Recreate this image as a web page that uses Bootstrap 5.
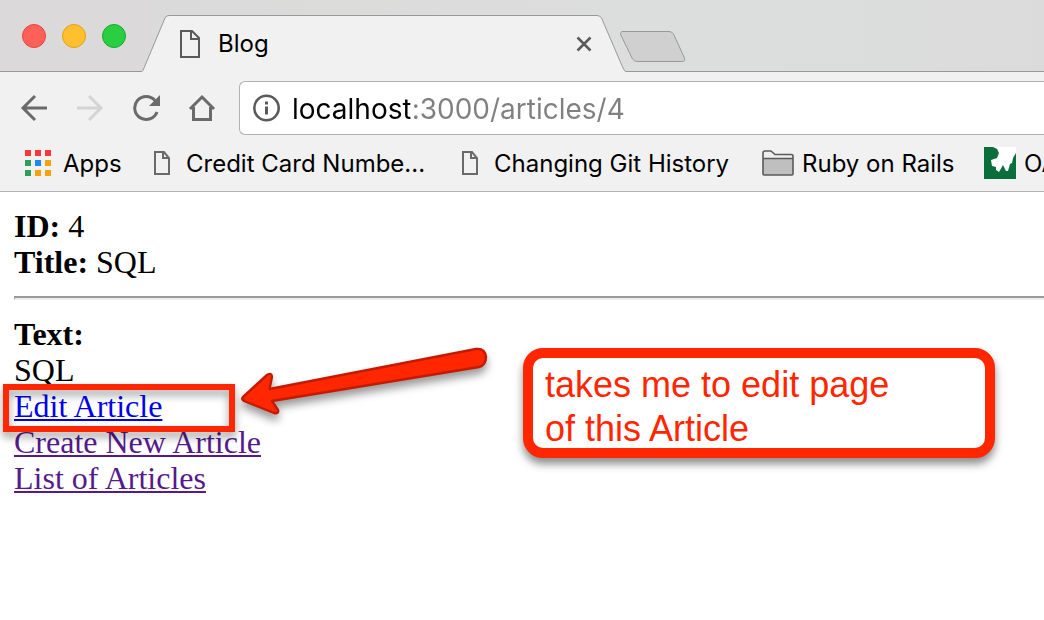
<!DOCTYPE html>
<html lang="en">
<head>
<meta charset="utf-8">
<meta name="viewport" content="width=device-width, initial-scale=1">
<title>Blog</title>
<link href="https://cdn.jsdelivr.net/npm/bootstrap@5.3.0/dist/css/bootstrap.min.css" rel="stylesheet">
<style>
  body { background: #fff; color: #000; overflow-x: hidden; }
  svg { display: block; flex: none; }
  .browser-ui { background: #f1f1f1; border-bottom: 1px solid #b2b2b2; font-family: Inter, "Liberation Sans", sans-serif; font-size: 24px; line-height: 32px; overflow: hidden; }
  .tab-strip { height: 72px; background: linear-gradient(90deg, #dbd9d9, #dcdedd 70%, #dbdbdb); box-shadow: inset 0 -1px #999; }
  .lights { gap: 16px; padding: 24px 0 0 22px; width: 142px; }
  .light { width: 24px; height: 24px; border-radius: 50%; border: 1px solid; }
  .light-close { background: #ff6159; border-color: #e2463f; }
  .light-min { background: #ffbf2f; border-color: #e1a116; }
  .light-max { background: #29ce41; border-color: #17a92b; }
  .page-tab { width: 478px; height: 72px; padding: 16px 28px 0 38px; }
  .tab-row { gap: 18px; }
  .plain-btn { background: none; border: 0; padding: 0; color: inherit; }
  .new-tab { padding-top: 28px; }
  .nav-tools { padding: 9px 0 0 20px; }
  .tool-set { gap: 28px; width: 219px; }
  .address { background: #fff; border: 1px solid #b2b2b2; border-right: 0; border-radius: 6px 0 0 6px; height: 54px; padding: 0 12px; gap: 10px; }
  .url-input { border: 0; outline: 0; padding: 2px 0 0; height: 42px; min-width: 0; font: 28px/40px Inter, "Liberation Sans", sans-serif; color: #808080; background: linear-gradient(90deg, #000 118px, #808080 118px); -webkit-background-clip: text; background-clip: text; -webkit-text-fill-color: transparent; }
  .bookmarks { height: 56px; padding-left: 25px; white-space: nowrap; }
  .bookmarks a { color: #000; text-decoration: none; flex: none; gap: 8px; }
  .bookmarks .bm-apps { width: 129px; gap: 12px; }
  .bookmarks .bm-page { width: 308px; gap: 16px; }
  .bookmarks .bm-page-last { width: 300px; }
  .bookmarks .bm-folder { width: 222px; }
  .bm-label { padding-top: 2px; }
  .article { padding: 16px 0 16px 14px; font: 32px/36px "Liberation Serif", serif; }
  .article hr { margin: 16px 0; border: 0; border-top: 2px solid #999; border-bottom: 2px solid #eee; border-left: 1px solid #999; opacity: 1; }
  .article a { color: #551a8b; text-underline-offset: 2px; text-decoration-thickness: 2px; }
  .article a.fresh { color: #00e; }
  .highlight { left: -11px; top: -4px; width: 232px; height: 48px; border: 6px solid #ff2600; filter: drop-shadow(0 5px 4px rgba(0,0,0,.4)); pointer-events: none; }
  .arrow { left: 226px; top: -44px; filter: drop-shadow(0 6px 4px rgba(0,0,0,.4)); overflow: visible; pointer-events: none; }
  .callout { left: 523px; top: 156px; width: 472px; height: 110px; border: 10px solid #ff2600; border-radius: 20px; background: #fff; box-shadow: 0 6px 8px rgba(0,0,0,.45); padding: 5px 12px 0; color: #ff2600; font: 36px/44px "Liberation Sans", sans-serif; }
</style>
</head>
<body>
<header class="browser-ui">
  <div class="tab-strip d-flex">
    <div class="lights d-flex flex-shrink-0">
      <button class="light light-close p-0" aria-label="Close window"></button>
      <button class="light light-min p-0" aria-label="Minimize window"></button>
      <button class="light light-max p-0" aria-label="Zoom window"></button>
    </div>
    <div class="page-tab position-relative flex-shrink-0">
      <svg class="position-absolute top-0 start-0" width="484" height="72" viewBox="0 0 484 72" aria-hidden="true"><path d="M0 71.5Q1 71 2 68L23 18Q24 15.500 27 15.500H455Q458 15.500 459.500 18L481 68Q482.500 71.500 484 71.500V73H0Z" fill="#f1f1f1"/><path d="M0 71.500Q1 71 2 68L23 18Q24 15.500 27 15.500H455Q458 15.500 459.500 18L481 68Q482.500 71.500 484 71.500" fill="none" stroke="#999"/></svg>
      <div class="tab-row d-flex align-items-center position-relative h-100">
        <svg width="20" height="28" viewBox="0 0 20 28" fill="none" stroke="#5a5a5a" stroke-width="2" aria-hidden="true"><path d="M1 1H12L19 8V27H1ZM11 1V9H19"/></svg>
        <span class="flex-grow-1">Blog</span>
        <button class="plain-btn" aria-label="Close tab"><svg width="16" height="16" viewBox="0 0 16 16" stroke="#5a5a5a" stroke-width="2.500"><path d="M1.500 1.500L14.500 14.500M14.500 1.500L1.500 14.500"/></svg></button>
      </div>
    </div>
    <button class="plain-btn new-tab align-self-start" aria-label="New tab"><svg width="66" height="36" viewBox="0 0 66 36"><path d="M3 3.500H49Q52 3.500 53.500 6L64.500 30Q65.500 33.500 62 33.500H18Q14 33.500 12.500 31L.8 7Q-.2 3.500 3 3.500Z" fill="#d0d0d0" stroke="#999"/></svg></button>
  </div>
  <div class="nav-tools d-flex align-items-center">
    <div class="tool-set d-flex flex-shrink-0">
      <button class="plain-btn" aria-label="Back"><svg width="28" height="28" viewBox="0 0 28 28" fill="none" stroke="#6a6a6a" stroke-width="3"><path d="M27 14H3M15 2L3 14L15 26"/></svg></button>
      <button class="plain-btn" aria-label="Forward"><svg width="28" height="28" viewBox="0 0 28 28" fill="none" stroke="#d4d4d4" stroke-width="3"><path d="M1 14H25M13 2L25 14L13 26"/></svg></button>
      <button class="plain-btn" aria-label="Reload"><svg width="28" height="28" viewBox="0 0 28 28"><path d="M23 6.500A11.500 11.500 0 1 0 25 18" fill="none" stroke="#6a6a6a" stroke-width="3"/><path d="M28 1V12H17Z" fill="#6a6a6a"/></svg></button>
      <button class="plain-btn" aria-label="Home"><svg width="28" height="28" viewBox="0 0 28 28" fill="none" stroke="#6a6a6a" stroke-width="3"><path d="M2 15L14 3L26 15M5.500 13V25.500H22.500V13"/></svg></button>
    </div>
    <div class="address d-flex align-items-center flex-grow-1">
      <svg width="30" height="30" viewBox="0 0 30 30" aria-hidden="true"><circle cx="14.500" cy="15" r="12.200" fill="none" stroke="#5a5a5a" stroke-width="2.600"/><path d="M13 8.500H16V11.500H13ZM13 13.500H16V21.500H13Z" fill="#5a5a5a"/></svg>
      <input class="url-input flex-grow-1" type="text" aria-label="Address" value="localhost:3000/articles/4">
    </div>
  </div>
  <nav class="bookmarks d-flex align-items-center" aria-label="Bookmarks">
    <a href="#" class="d-flex align-items-center bm-apps"><svg width="26" height="26" viewBox="0 0 26 26" aria-hidden="true"><path d="M0 0h6v6H0zM10 0h6v6h-6zM20 0h6v6h-6z" fill="#f9383a"/><path d="M0 10h6v6H0zM0 20h6v6H0z" fill="#2e9f58"/><path d="M10 10h6v6h-6z" fill="#1e88f7"/><path d="M20 10h6v6h-6zM10 20h6v6h-6zM20 20h6v6h-6z" fill="#f3a508"/></svg><span class="bm-label">Apps</span></a>
    <a href="#" class="d-flex align-items-center bm-page"><svg width="16" height="24" viewBox="0 0 16 24" fill="none" stroke="#6a6a6a" stroke-width="2" aria-hidden="true"><path d="M1 1H10L15 7V23H1ZM9 1V7H15"/></svg><span class="bm-label">Credit Card Numbe...</span></a>
    <a href="#" class="d-flex align-items-center bm-page bm-page-last"><svg width="16" height="24" viewBox="0 0 16 24" fill="none" stroke="#6a6a6a" stroke-width="2" aria-hidden="true"><path d="M1 1H10L15 7V23H1ZM9 1V7H15"/></svg><span class="bm-label">Changing Git History</span></a>
    <a href="#" class="d-flex align-items-center bm-folder"><svg width="32" height="26" viewBox="0 0 32 26" aria-hidden="true"><path d="M1 3Q1 1 3 1H9L13 4.500H29Q31 4.500 31 6V8H1Z" fill="#efefef"/><path d="M1 8H31V25H1Z" fill="#bfbfbf"/><path d="M1 24V3Q1 1 3 1H9L13 4.500H29Q31 4.500 31 6V24Q31 25 30 25H2Q1 25 1 24ZM1 8.500H31" fill="none" stroke="#5a5a5a" stroke-width="1.600"/></svg><span class="bm-label">Ruby on Rails</span></a>
    <a href="#" class="d-flex align-items-center"><svg width="32" height="32" viewBox="0 0 32 32" aria-hidden="true"><path d="M0 0H32V32H0Z" fill="#0a6e3c"/><path d="M9 0H32V6L29 11L28 16L26 17L24 24H22L19 18L15 25L12 23V20L8 19L7 13L13 11L15 6L13 2Z" fill="#fff"/></svg><span class="bm-label">OA</span></a>
  </nav>
</header>
<main class="article position-relative">
  <div><b>ID:</b> 4</div>
  <div><b>Title:</b> SQL</div>
  <hr>
  <div><b>Text:</b></div>
  <div>SQL</div>
  <div class="position-relative">
    <a href="#" class="fresh">Edit Article</a>
    <div class="highlight position-absolute"></div>
    <svg class="arrow position-absolute" width="250" height="72" viewBox="0 0 250 72" aria-hidden="true"><path d="M3 53L27 31Q32 28 32 33L29.500 45L236 5Q245 4 246 13Q246 21 239 23L32 57L38 66Q39 70 34 69L4 57Q1 55 3 53Z" fill="#ff2600" stroke="#c41b00" stroke-width="2.400" stroke-linejoin="round"/></svg>
  </div>
  <div><a href="#">Create New Article</a></div>
  <div><a href="#">List of Articles</a></div>
  <aside class="callout position-absolute">takes me to edit page<br>of this Article</aside>
</main>
<script src="https://cdn.jsdelivr.net/npm/bootstrap@5.3.0/dist/js/bootstrap.bundle.min.js"></script>
</body>
</html>
